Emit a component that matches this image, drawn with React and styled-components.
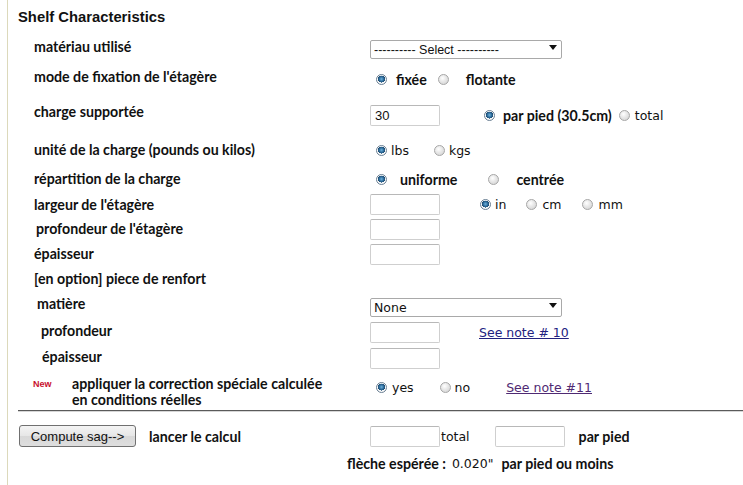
import React from "react";
import styled, { createGlobalStyle } from "styled-components";

const GlobalStyle = createGlobalStyle`
  html, body {
    margin: 0;
    padding: 0;
    background: #ffffff;
  }
  body {
    font-family: "Lato", "Liberation Sans", sans-serif;
    color: #111;
  }
`;

const Page = styled.div`
  margin-left: 7px;
  min-height: 485px;
  border-left: 1px solid #dcd9bb;
  padding-left: 10px;
  box-sizing: border-box;
`;

const Title = styled.div`
  height: 32px;
  display: flex;
  align-items: center;
  padding-top: 2px;
  box-sizing: border-box;
  font-family: "Liberation Sans", Arial, sans-serif;
  font-weight: bold;
  font-size: 14.8px;
`;

const Row = styled.div`
  display: grid;
  grid-template-columns: 352px 1fr;
  align-items: center;
  box-sizing: border-box;
  height: ${(p) => p.h}px;
  padding-top: ${(p) => p.pt || 0}px;
`;

const Label = styled.div`
  padding-left: ${(p) => p.indent || 16}px;
  margin-top: ${(p) => p.dy || 0}px;
  font-weight: bold;
  font-size: 14.2px;
  line-height: 16px;
`;

const Controls = styled.div`
  display: flex;
  align-items: center;
  margin-top: ${(p) => p.dy || 0}px;
`;

const TextBox = styled.input`
  width: 70px;
  height: 21px;
  margin-left: ${(p) => p.ml || 0}px;
  box-sizing: border-box;
  border: 1px solid #cfcfcf;
  border-top-color: #b8b8b8;
  border-radius: 2px;
  padding: 0 4px;
  font-family: "Liberation Sans", Arial, sans-serif;
  font-size: 13px;
  color: #111;
  background: #fff;
  outline: none;
`;

const SelectWrap = styled.div`
  position: relative;
  width: 192px;
  height: 19px;
`;

const Select = styled.select`
  appearance: none;
  -webkit-appearance: none;
  width: 100%;
  height: 100%;
  box-sizing: border-box;
  border: 1px solid #a9a9a9;
  border-radius: 2px;
  background: #fff;
  padding: 0 0 0 3px;
  font-family: ${(p) =>
    p.verdana ? '"DejaVu Sans", Verdana, sans-serif' : '"Liberation Sans", Arial, sans-serif'};
  font-size: 12.5px;
  color: #111;
  outline: none;
`;

const Arrow = styled.svg`
  position: absolute;
  right: 5px;
  top: 7px;
  pointer-events: none;
`;

const RadioDot = styled.span`
  flex: none;
  width: 11px;
  height: 11px;
  border-radius: 50%;
  box-sizing: border-box;
  border: 1px solid ${(p) => (p.checked ? "#6a7f93" : "#a6a6a6")};
  background: ${(p) =>
    p.checked
      ? "radial-gradient(circle at 50% 45%, #6fb3de 0, #2f6d9c 2.2px, #1d4d74 3.4px, #ffffff 3.6px, #e9e9e9 100%)"
      : "radial-gradient(circle at 40% 35%, #ffffff 0, #e7e7e7 45%, #cfcfcf 100%)"};
  margin-left: ${(p) => p.ml || 0}px;
`;

const OptText = styled.span`
  margin-left: ${(p) => p.gap}px;
  font-family: ${(p) =>
    p.bold ? '"Lato", sans-serif' : '"DejaVu Sans", Verdana, sans-serif'};
  font-weight: ${(p) => (p.bold ? "bold" : "normal")};
  font-size: ${(p) => (p.bold ? "14.2px" : "12.5px")};
  white-space: nowrap;
`;

const Plain = styled.span`
  margin-left: ${(p) => p.ml || 0}px;
  font-family: "DejaVu Sans", Verdana, sans-serif;
  font-size: 12.5px;
`;

const Bold = styled.span`
  margin-left: ${(p) => p.ml || 0}px;
  font-weight: bold;
  font-size: 14.2px;
  white-space: nowrap;
`;

const NoteLink = styled.a`
  margin-left: ${(p) => p.ml}px;
  font-family: "DejaVu Sans", Verdana, sans-serif;
  font-size: 12.5px;
  color: ${(p) => (p.visited ? "#4f2a73" : "#22227f")};
  text-decoration: underline;
  cursor: pointer;
`;

const NewBadge = styled.span`
  position: absolute;
  left: 0;
  top: 0;
  font-family: "Liberation Sans", Arial, sans-serif;
  font-weight: bold;
  font-size: 9px;
  color: #c8102e;
`;

const NewLabel = styled.div`
  position: relative;
  padding-left: 39px;
  font-weight: bold;
  font-size: 14.2px;
  line-height: 16px;
  margin-left: 15px;
  margin-top: 2px;
`;

const Rule = styled.div`
  height: 1px;
  background: #5a5a5a;
  border-bottom: 1px solid #d6d6d6;
`;

const ComputeButton = styled.button`
  width: 117px;
  height: 22px;
  margin-left: 1px;
  border: 1px solid #707070;
  border-radius: 3px;
  background: linear-gradient(#f4f4f4, #e6e6e6 50%, #d8d8d8 51%, #dedede);
  font-family: "Liberation Sans", Arial, sans-serif;
  font-size: 13px;
  color: #111;
  padding: 0;
`;

const ButtonCell = styled.div`
  display: flex;
  align-items: center;
`;

const ResultRow = styled.div`
  display: flex;
  align-items: center;
  height: 22px;
  padding-left: 329px;
`;

function Radio({ checked, ml, gap, bold, children }) {
  return (
    <>
      <RadioDot checked={checked} ml={ml} />
      <OptText gap={gap} bold={bold}>
        {children}
      </OptText>
    </>
  );
}

function DropDown({ value, verdana }) {
  return (
    <SelectWrap>
      <Select verdana={verdana} defaultValue={value}>
        <option>{value}</option>
      </Select>
      <Arrow width="8" height="5" viewBox="0 0 8 5">
        <path d="M0 0h8L4 5z" fill="#111" />
      </Arrow>
    </SelectWrap>
  );
}

export default function App() {
  return (
    <>
      <GlobalStyle />
      <Page>
        <Title>Shelf Characteristics</Title>

        <Row h={30}>
          <Label>matériau utilisé</Label>
          <Controls>
            <DropDown value="---------- Select ----------" />
          </Controls>
        </Row>

        <Row h={32}>
          <Label dy={-2}>mode de fixation de l'étagère</Label>
          <Controls dy={2}>
            <Radio checked ml={6} gap={9} bold>
              fixée
            </Radio>
            <Radio ml={11} gap={17} bold>
              flotante
            </Radio>
          </Controls>
        </Row>

        <Row h={40}>
          <Label dy={-5}>charge supportée</Label>
          <Controls dy={2}>
            <TextBox defaultValue="30" />
            <Radio checked ml={44} gap={8} bold>
              par pied (30.5cm)
            </Radio>
            <Radio ml={7} gap={5}>
              total
            </Radio>
          </Controls>
        </Row>

        <Row h={32}>
          <Label>unité de la charge (pounds ou kilos)</Label>
          <Controls>
            <Radio checked ml={6} gap={4}>
              lbs
            </Radio>
            <Radio ml={25} gap={4}>
              kgs
            </Radio>
          </Controls>
        </Row>

        <Row h={26}>
          <Label>répartition de la charge</Label>
          <Controls>
            <Radio checked ml={6} gap={13} bold>
              uniforme
            </Radio>
            <Radio ml={31} gap={17} bold>
              centrée
            </Radio>
          </Controls>
        </Row>

        <Row h={25}>
          <Label>largeur de l'étagère</Label>
          <Controls>
            <TextBox />
            <Radio checked ml={40} gap={4}>
              in
            </Radio>
            <Radio ml={20} gap={5}>
              cm
            </Radio>
            <Radio ml={21} gap={5}>
              mm
            </Radio>
          </Controls>
        </Row>

        <Row h={24}>
          <Label indent={18}>profondeur de l'étagère</Label>
          <Controls>
            <TextBox />
          </Controls>
        </Row>

        <Row h={26}>
          <Label>épaisseur</Label>
          <Controls>
            <TextBox />
          </Controls>
        </Row>

        <Row h={23}>
          <Label>[en option] piece de renfort</Label>
          <Controls />
        </Row>

        <Row h={30}>
          <Label indent={19} dy={-3}>
            matière
          </Label>
          <Controls>
            <DropDown value="None" verdana />
          </Controls>
        </Row>

        <Row h={25}>
          <Label indent={23} dy={-3}>
            profondeur
          </Label>
          <Controls>
            <TextBox />
            <NoteLink ml={39}>See note # 10</NoteLink>
          </Controls>
        </Row>

        <Row h={26}>
          <Label indent={24} dy={-2}>
            épaisseur
          </Label>
          <Controls>
            <TextBox />
          </Controls>
        </Row>

        <Row h={39}>
          <NewLabel>
            <NewBadge>New</NewBadge>
            appliquer la correction spéciale calculée
            <br />
            en conditions réelles
          </NewLabel>
          <Controls dy={-6}>
            <Radio checked ml={6} gap={5}>
              yes
            </Radio>
            <Radio ml={26} gap={4}>
              no
            </Radio>
            <NoteLink ml={36} visited>
              See note #11
            </NoteLink>
          </Controls>
        </Row>

        <Rule />

        <Row h={40} pt={8}>
          <ButtonCell>
            <ComputeButton>Compute sag--&gt;</ComputeButton>
            <Bold ml={13}>lancer le calcul</Bold>
          </ButtonCell>
          <Controls>
            <TextBox />
            <Plain ml={1}>total</Plain>
            <TextBox ml={25} />
            <Bold ml={14}>par pied</Bold>
          </Controls>
        </Row>

        <ResultRow>
          <Bold>flèche espérée :</Bold>
          <Plain ml={6}>0.020"</Plain>
          <Bold ml={8}>par pied ou moins</Bold>
        </ResultRow>
      </Page>
    </>
  );
}
